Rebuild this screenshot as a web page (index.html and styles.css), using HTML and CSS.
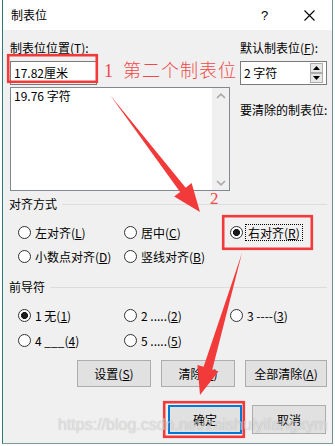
FILE: index.html
```html
<!DOCTYPE html>
<html lang="zh-CN">
<head>
<meta charset="utf-8">
<title>制表位</title>
<link rel="stylesheet" href="styles.css">
</head>
<body>
<div class="win">
  <div class="titlebar">
    <span class="title">制表位</span>
    <div class="ctrls">
      <span class="help">?</span>
      <span class="close"><svg width="11" height="11" viewBox="0 0 11 11"><path d="M0.5 0.5L10.5 10.5M10.5 0.5L0.5 10.5" stroke="#000" stroke-width="1.1" fill="none"/></svg></span>
    </div>
  </div>
  <div class="body">
    <div class="top">
      <div class="lcol">
        <div class="lbl">制表位位置(<u>T</u>):</div>
        <div class="input">17.82厘米</div>
        <div class="list">
          <div class="item">19.76 字符</div>
          <div class="sb">
            <svg width="10" height="6" viewBox="0 0 10 6"><path d="M1 5L5 1.2L9 5" stroke="#a8a8a8" stroke-width="1.6" fill="none"/></svg>
            <svg width="10" height="6" viewBox="0 0 10 6"><path d="M1 1L5 4.8L9 1" stroke="#a8a8a8" stroke-width="1.6" fill="none"/></svg>
          </div>
        </div>
      </div>
      <div class="rcol">
        <div class="lbl">默认制表位(<u>F</u>):</div>
        <div class="spin">
          <span class="spintext">2 字符</span>
          <div class="spinbtns">
            <div class="sbtn"><svg width="7" height="4" viewBox="0 0 7 4"><path d="M0 4L3.5 0L7 4Z" fill="#000"/></svg></div>
            <div class="sbtn"><svg width="7" height="4" viewBox="0 0 7 4"><path d="M0 0L3.5 4L7 0Z" fill="#000"/></svg></div>
          </div>
        </div>
        <div class="lbl clear">要清除的制表位:</div>
      </div>
    </div>

    <div class="group g1"><span>对齐方式</span><i class="rule"></i></div>
    <div class="radios r1">
      <div class="radio"><span class="dot"></span><span class="rl">左对齐(<u>L</u>)</span></div>
      <div class="radio"><span class="dot"></span><span class="rl">居中(<u>C</u>)</span></div>
      <div class="radio"><span class="dot on"></span><span class="rl focus">右对齐(<u>R</u>)</span></div>
      <div class="radio"><span class="dot"></span><span class="rl">小数点对齐(<u>D</u>)</span></div>
      <div class="radio"><span class="dot"></span><span class="rl">竖线对齐(<u>B</u>)</span></div>
    </div>

    <div class="group g2"><span>前导符</span><i class="rule"></i></div>
    <div class="radios r2">
      <div class="radio"><span class="dot on"></span><span class="rl">1 无(<u>1</u>)</span></div>
      <div class="radio"><span class="dot"></span><span class="rl">2 .....(<u>2</u>)</span></div>
      <div class="radio"><span class="dot"></span><span class="rl">3 ----(<u>3</u>)</span></div>
      <div class="radio"><span class="dot"></span><span class="rl">4 ___(<u>4</u>)</span></div>
      <div class="radio"><span class="dot"></span><span class="rl">5 .....(<u>5</u>)</span></div>
    </div>

    <div class="btnrow">
      <div class="btn w74">设置(<u>S</u>)</div>
      <div class="btn w74">清除(<u>E</u>)</div>
      <div class="btn w82">全部清除(<u>A</u>)</div>
    </div>
    <div class="btnrow b2">
      <div class="btn big default">确定</div>
      <div class="btn big">取消</div>
    </div>
  </div>
</div>

<svg class="overlay" width="335" height="446" viewBox="0 0 335 446">
  <rect x="8.2" y="55.2" width="88.6" height="26.6" fill="none" stroke="#f23a3a" stroke-width="2.6"/>
  <rect x="223.2" y="216.2" width="88.6" height="32.6" fill="none" stroke="#f23a3a" stroke-width="2.6"/>
  <rect x="164.2" y="402.2" width="79.6" height="34.6" fill="none" stroke="#f23a3a" stroke-width="2.6"/>
  <polygon points="110,95 185.7,187.7 191.6,183.1 200,212 174.2,196.5 180.1,191.9" fill="#f23a3a"/>
  <polygon points="242,253 203.6,366.8 197.4,365 200,395 218.5,371.2 212.3,369.4" fill="#f23a3a"/>
</svg>
<span class="note1"><span class="num">1</span>第二个制表位</span>
<span class="note2">2</span>
<span class="wm">https://blog.csdn.net/zaishuiyifangxym</span>
</body>
</html>
```

FILE: styles.css
```css
* { box-sizing: border-box; }
html, body { margin: 0; padding: 0; }
body {
  background: #fff;
  width: 335px;
  height: 446px;
  overflow: hidden;
  position: relative;
  font-family: "Noto Sans CJK SC", "Noto Sans", sans-serif;
  font-size: 12px;
  color: #000;
}
u { text-decoration: underline; text-underline-offset: 1px; }

.win {
  margin-left: 2px;
  width: 331px;
  height: 444px;
  border-left: 1px solid #2b7b7a;
  border-right: 1px solid #6f8f8f;
  border-bottom: 1px solid #7d9a9a;
  background: #f0f0f0;
  display: flex;
  flex-direction: column;
}

.titlebar {
  height: 30px;
  background: #fff;
  display: flex;
  align-items: center;
  padding-left: 8px;
}
.title { font-size: 12px; line-height: 16px; }
.ctrls { margin-left: auto; display: flex; height: 30px; }
.help, .close {
  width: 46px;
  display: flex;
  align-items: center;
  justify-content: center;
}
.help { font-family: "Liberation Sans", sans-serif; font-size: 13px; padding-left: 3px; }

.body {
  padding: 10px 5px 0 7px;
  flex: 1;
}

.top {
  display: grid;
  grid-template-columns: 220px 1fr;
  column-gap: 10px;
}
.lbl { line-height: 16px; height: 16px; white-space: nowrap; }
.lcol .lbl { margin-bottom: 5px; }
.rcol .lbl { margin-bottom: 5px; }
.rcol .lbl.clear { margin-top: 17px; margin-bottom: 0; }

.input {
  width: 87px;
  height: 24px;
  border: 1px solid #7a7a7a;
  background: #fff;
  line-height: 22px;
  padding-left: 3px;
}
.list {
  margin-top: 2px;
  height: 104px;
  border: 1px solid #828790;
  background: #fff;
  display: flex;
}
.item { flex: 1; padding-left: 3px; line-height: 16px; }
.sb {
  width: 17px;
  background: #f0f0f0;
  display: flex;
  flex-direction: column;
  justify-content: space-between;
  align-items: center;
  padding: 5px 0 4px;
}

.spin {
  height: 24px;
  border: 1px solid #7a7a7a;
  background: #fff;
  display: flex;
  align-items: center;
  padding-left: 3px;
}
.spintext { line-height: 16px; }
.spinbtns {
  margin-left: auto;
  margin-right: 3px;
  display: flex;
  flex-direction: column;
  height: 22px;
  padding: 1px 0;
}
.sbtn {
  width: 13px;
  height: 10px;
  border: 1px solid #adadad;
  background: #e8e8e8;
  display: flex;
  align-items: center;
  justify-content: center;
}

.group {
  display: flex;
  align-items: center;
  gap: 5px;
  line-height: 16px;
  height: 16px;
  margin-left: -1px;
}
.group.g1 { margin-top: 5px; }
.group.g2 { margin-top: 15px; }
.rule { flex: 1; height: 1px; background: #dcdcdc; display: block; }

.radios {
  display: grid;
  grid-template-columns: 106px 106px 1fr;
  padding-left: 8px;
  margin-top: 12px;
  grid-auto-rows: 16px;
}
.radios.r1 { row-gap: 8px; }
.radios.r2 { row-gap: 9px; }
.radio { display: flex; align-items: center; white-space: nowrap; }
.dot {
  width: 13px;
  height: 13px;
  border: 1px solid #333;
  border-radius: 50%;
  background: #fff;
  flex: none;
}
.dot.on { background: radial-gradient(circle, #1a1a1a 0 3.2px, #fff 3.8px); }
.rl {
  margin-left: 1px;
  padding: 0 2px;
  border: 1px dotted transparent;
  line-height: 15px;
}
.rl.focus { border-color: #000; margin-left: 2px; }

.btnrow {
  display: flex;
  justify-content: flex-end;
  gap: 10px;
  margin-top: 12px;
}
.btnrow.b2 { margin-top: 18px; padding-right: 1px; }
.btn {
  height: 27px;
  border: 1px solid #adadad;
  background: #e1e1e1;
  display: flex;
  align-items: center;
  justify-content: center;
  line-height: 16px;
}
.w74 { width: 74px; }
.w82 { width: 82px; }
.btn.big { width: 74px; height: 29px; }
.btn.default { border: 2px solid #0078d7; }

.overlay { position: absolute; left: 0; top: 0; pointer-events: none; }
.note1 {
  position: absolute;
  left: 104px;
  top: 61px;
  font-family: "Liberation Serif", "Noto Sans CJK SC", serif;
  font-size: 18px;
  line-height: 20px;
  font-weight: 300;
  letter-spacing: 1px;
  color: #f04848;
  white-space: nowrap;
}
.note1 .num { display: inline-block; width: 19px; }
.note2 {
  position: absolute;
  left: 210px;
  top: 190px;
  font-family: "Liberation Serif", serif;
  font-size: 17px;
  line-height: 17px;
  color: #f04848;
}
.wm {
  position: absolute;
  left: 58px;
  top: 416px;
  font-family: "Liberation Sans", sans-serif;
  font-size: 16px;
  line-height: 18px;
  color: rgba(255, 255, 255, 0.6);
  text-shadow: 0 0 1px rgba(0, 0, 0, 0.3);
  white-space: nowrap;
  pointer-events: none;
}
```
